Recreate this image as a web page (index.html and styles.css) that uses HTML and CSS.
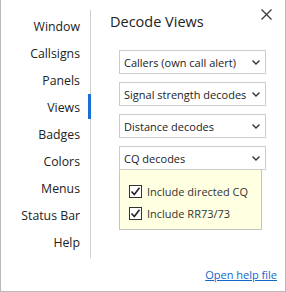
FILE: index.html
```html
<!DOCTYPE html>
<html lang="en">
<head>
    <meta charset="UTF-8">
    <meta name="viewport" content="width=device-width, initial-scale=1.0">
    <title>Settings - Decode Views</title>
    <link rel="stylesheet" href="styles.css">
</head>
<body>
    <div class="window">
        <nav class="sidebar">
            <div class="nav-item">Window</div>
            <div class="nav-item">Callsigns</div>
            <div class="nav-item">Panels</div>
            <div class="nav-item active">Views</div>
            <div class="nav-item">Badges</div>
            <div class="nav-item">Colors</div>
            <div class="nav-item">Menus</div>
            <div class="nav-item">Status Bar</div>
            <div class="nav-item">Help</div>
        </nav>

        <main class="content">
            <div class="title-row">
                <h1>Decode Views</h1>
                <button class="close" title="Close">
                    <svg width="11" height="11" viewBox="0 0 11 11">
                        <path d="M0.5 0.5 L10.5 10.5 M10.5 0.5 L0.5 10.5" stroke="#3a3a3a" stroke-width="1.3" fill="none"/>
                    </svg>
                </button>
            </div>

            <div class="views">
                <div class="dropdown"><span>Callers (own call alert)</span><svg class="chev" width="8" height="5" viewBox="0 0 8 5"><path d="M0.5 0.5 L4 4 L7.5 0.5" stroke="#333" stroke-width="1.4" fill="none"/></svg></div>
                <div class="dropdown"><span>Signal strength decodes</span><svg class="chev" width="8" height="5" viewBox="0 0 8 5"><path d="M0.5 0.5 L4 4 L7.5 0.5" stroke="#333" stroke-width="1.4" fill="none"/></svg></div>
                <div class="dropdown"><span>Distance decodes</span><svg class="chev" width="8" height="5" viewBox="0 0 8 5"><path d="M0.5 0.5 L4 4 L7.5 0.5" stroke="#333" stroke-width="1.4" fill="none"/></svg></div>
                <div class="dropdown open"><span>CQ decodes</span><svg class="chev" width="8" height="5" viewBox="0 0 8 5"><path d="M0.5 0.5 L4 4 L7.5 0.5" stroke="#333" stroke-width="1.4" fill="none"/></svg></div>

                <div class="options">
                    <label class="option">
                        <span class="check"><svg width="11" height="11" viewBox="0 0 11 11"><path d="M1.5 5.5 L4.3 8.5 L9.5 1.8" stroke="#222" stroke-width="1.6" fill="none"/></svg></span>
                        Include directed CQ
                    </label>
                    <label class="option">
                        <span class="check"><svg width="11" height="11" viewBox="0 0 11 11"><path d="M1.5 5.5 L4.3 8.5 L9.5 1.8" stroke="#222" stroke-width="1.6" fill="none"/></svg></span>
                        Include RR73/73
                    </label>
                </div>
            </div>

            <div class="footer">
                <a href="#" class="help-link">Open help file</a>
            </div>
        </main>
    </div>
</body>
</html>
```

FILE: styles.css
```css
/* settings dialog */
body { margin: 0; font-family: "Open Sans", "Noto Sans", sans-serif; color: #222; background: #fff; }
.window { width: 286px; height: 292px; box-sizing: border-box; border: 1px solid #b9b9b9; border-top: none; display: flex; background: #fff; }

.sidebar { width: 90px; margin-top: 10px; height: 248px; padding-top: 3px; box-sizing: border-box; border-right: 1px solid #cfcfcf; }
.nav-item { position: relative; height: 27px; line-height: 27px; text-align: right; padding-right: 10px; font-size: 12.3px; color: #222; }
.nav-item.active::after { content: ""; position: absolute; right: -1px; top: 0; width: 3px; height: 25px; background: #1a6ed8; }

.content { flex: 1; display: flex; flex-direction: column; padding: 11px 19px 7px 19px; }
.title-row { display: flex; align-items: flex-start; justify-content: space-between; }
.title-row h1 { margin: 0; font-size: 14.5px; font-weight: normal; line-height: 22px; color: #222; }
.close { border: none; background: none; padding: 0; margin: -2px -6px 0 0; width: 11px; height: 11px; cursor: pointer; }
.close svg { display: block; }

.views { margin: 17px 0 0 9px; }
.dropdown { display: flex; align-items: center; justify-content: space-between; height: 24px; box-sizing: border-box; border: 1px solid #cdcdcd; padding: 0 5px 0 4px; margin-bottom: 8px; font-size: 11px; white-space: nowrap; color: #222; }
.dropdown.open { margin-bottom: 0; }
.chev { display: block; flex-shrink: 0; }

.options { width: 143px; box-sizing: border-box; border: 1px solid #c4c4c4; border-top: none; background: #ffffe1; padding: 10px 0 5px 9px; }
.option { display: flex; align-items: center; height: 22px; font-size: 11px; color: #333; }
.check { width: 13px; height: 13px; box-sizing: border-box; border: 1px solid #333; background: #fff; margin-right: 5px; display: flex; align-items: center; justify-content: center; }

.footer { margin-top: auto; text-align: right; margin-right: -11px; }
.help-link { font-size: 11px; color: #1467c9; text-decoration: underline; }
```
